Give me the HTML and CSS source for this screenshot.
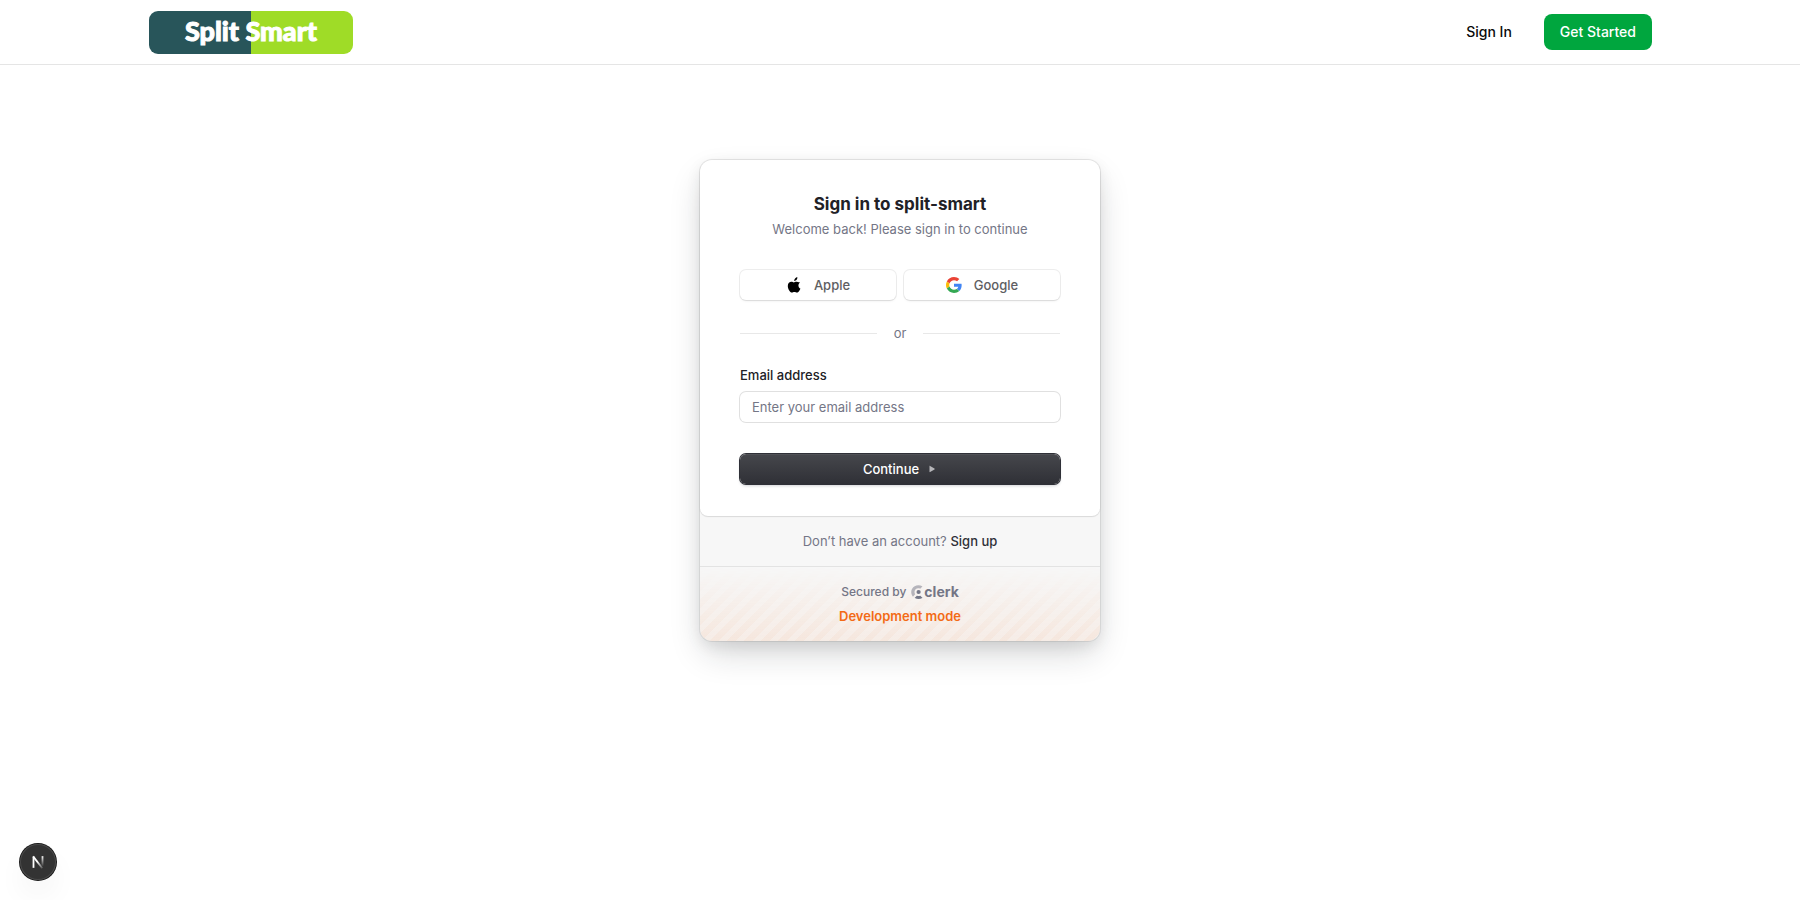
FILE: index.html
```html
<!DOCTYPE html>
<html lang="en">
<head>
<meta charset="utf-8">
<title>Split Smart</title>
<link rel="stylesheet" href="styles.css">
</head>
<body>
<header class="site-header">
  <div class="container">
    <a class="logo" href="#">Split Smart</a>
    <nav class="nav">
      <a class="nav-link" href="#">Sign In</a>
      <button class="nav-cta" type="button">Get Started</button>
    </nav>
  </div>
</header>
<main class="page">
  <div class="card">
    <section class="card-main">
      <div class="heading">
        <h1 class="title">Sign in to split-smart</h1>
        <p class="subtitle">Welcome back! Please sign in to continue</p>
      </div>
      <div class="socials">
        <button class="social" type="button">
          <svg class="social-icon" viewBox="0 0 16 16" aria-hidden="true"><path d="M14.1 5.5c-.1.1-1.7 1-1.7 2.9 0 2.300 2 3.100 2 3.100 0 .1-.3 1.100-1.100 2.200-.6.900-1.300 1.900-2.400 1.900s-1.300-.6-2.500-.6c-1.200 0-1.600.6-2.600.6s-1.700-.9-2.400-1.900C2.500 12.500 1.800 10.700 1.800 9c0-2.800 1.800-4.200 3.600-4.200 1 0 1.800.6 2.400.6.600 0 1.500-.7 2.600-.7.400 0 2 .1 3.700.8ZM10.600 2.700c.5-.6.800-1.300.8-2.100V.2c-.8 0-1.700.5-2.300 1.200-.5.500-.9 1.300-.9 2.100v.4c.8.100 1.800-.5 2.400-1.200Z"/></svg>
          <span>Apple</span>
        </button>
        <button class="social" type="button">
          <svg class="social-icon" viewBox="0 0 48 48" aria-hidden="true"><path fill="#ea4335" d="M24 9.500c3.540 0 6.710 1.220 9.210 3.600l6.850-6.850C35.900 2.380 30.470 0 24 0 14.620 0 6.510 5.380 2.560 13.220l7.980 6.190C12.430 13.720 17.740 9.500 24 9.500z"/><path fill="#4285f4" d="M46.980 24.550c0-1.570-.15-3.090-.38-4.550H24v9.020h12.940c-.58 2.960-2.260 5.480-4.780 7.180l7.730 6c4.510-4.180 7.090-10.360 7.090-17.650z"/><path fill="#fbbc05" d="M10.530 28.590A14.500 14.500 0 0 1 9.770 24c0-1.600.27-3.140.76-4.590l-7.980-6.190A23.900 23.900 0 0 0 0 24c0 3.880.92 7.540 2.560 10.780l7.970-6.190z"/><path fill="#34a853" d="M24 48c6.480 0 11.930-2.130 15.890-5.810l-7.730-6c-2.150 1.450-4.920 2.300-8.160 2.300-6.260 0-11.570-4.220-13.470-9.910l-7.980 6.190C6.510 42.620 14.620 48 24 48z"/></svg>
          <span>Google</span>
        </button>
      </div>
      <div class="divider">or</div>
      <form class="form">
        <div class="field">
          <label class="label" for="email">Email address</label>
          <input class="input" id="email" type="email" placeholder="Enter your email address">
        </div>
        <button class="continue" type="button">Continue
          <svg class="arrow" viewBox="0 0 10 10" aria-hidden="true"><path d="M2.500 2.200v5.600c0 .4.300.5.600.3l4.400-2.700c.3-.2.300-.6 0-.8L3.100 1.900c-.3-.2-.6 0-.6.3Z"/></svg>
        </button>
      </form>
    </section>
    <footer class="card-footer">
      <p class="signup">Don’t have an account? <a class="signup-link" href="#">Sign up</a></p>
      <div class="dev">
        <p class="secured">Secured by
          <a class="clerk" href="#">
            <svg class="clerk-icon" viewBox="0 0 12 14" aria-hidden="true"><path opacity=".5" d="M11.300 1.600 9.500 3.500c-.2.200-.4.200-.6.100C6.300 2.400 3.500 4.100 3.500 7c0 .7.200 1.300.5 1.900.1.200.1.400-.1.600L2.200 11.400c-.2.200-.4.200-.5 0C-.9 7.700.100 3.200 3.700 1.200c2.300-1.300 5.200-1.200 7.500 0 .2.100.2.300.1.400Z"/><circle cx="7.600" cy="7" r="2.100"/><path d="m11.400 12.700-1.800-1.800c-.2-.2-.4-.2-.6-.1-.8.400-2 .4-2.800 0-.2-.1-.4-.1-.6.100l-1.800 1.800c-.2.200-.1.300.1.400 2.200 1.200 5.100 1.200 7.400 0 .2-.1.300-.3.100-.4Z"/></svg>
            <span>clerk</span>
          </a>
        </p>
        <p class="dev-label">Development mode</p>
      </div>
    </footer>
  </div>
</main>
<button class="next-badge" type="button" aria-label="Open Next.js Dev Tools">
  <svg class="next-icon" viewBox="0 0 40 40" fill="none" aria-hidden="true">
    <defs>
      <linearGradient id="stem" x1="0" y1="13" x2="0" y2="25" gradientUnits="userSpaceOnUse"><stop stop-color="#fff"/><stop offset="1" stop-color="#fff" stop-opacity="0"/></linearGradient>
      <linearGradient id="slash" x1="20" y1="19" x2="26" y2="27" gradientUnits="userSpaceOnUse"><stop stop-color="#fff"/><stop offset="1" stop-color="#fff" stop-opacity=".1"/></linearGradient>
    </defs>
    <path stroke="#fff" stroke-width="2" d="M15 26.500V14"/>
    <path stroke="url(#slash)" stroke-width="2" d="m14.600 13.800 10.200 13.200"/>
    <path fill="url(#stem)" d="M24 13.500h2v12.500h-2z"/>
  </svg>
</button>
</body>
</html>
```
FILE: styles.css
```css
* { box-sizing: border-box; }
body {
  margin: 0;
  background: #fff;
  color: #0a0a0a;
  font-family: Inter, "Liberation Sans", sans-serif;
  font-size: 13px;
  line-height: 18px;
}
h1, p { margin: 0; }
a { color: inherit; text-decoration: none; }
button, input { font: inherit; border: 0; }
button { cursor: pointer; }

.site-header { border-bottom: 1px solid #e5e5e5; }
.container {
  display: flex;
  align-items: center;
  justify-content: space-between;
  max-width: 1536px;
  height: 64px;
  margin: 0 auto;
  padding: 0 16px;
}
.logo {
  width: 204px;
  height: 43px;
  margin-left: 1px;
  border-radius: 9px;
  background: linear-gradient(90deg, #28555a 50%, #9fdc27 50%);
  color: #fff;
  font-family: Lato, sans-serif;
  font-size: 27px;
  font-weight: 900;
  line-height: 40px;
  text-align: center;
  -webkit-text-stroke: 1px #fff;
}
.nav { display: flex; align-items: center; gap: 16px; font-size: 14px; font-weight: 500; line-height: 20px; }
.nav-link { padding: 8px 16px; }
.nav-cta {
  padding: 8px 16px;
  border-radius: 8px;
  background: #00a63e;
  color: #fff;
}

.page { display: flex; justify-content: center; padding: 95px 16px; }
.card {
  width: 100%;
  max-width: 400px;
  border-radius: 12px;
  background: #f7f7f7;
  box-shadow: 0 5px 15px rgba(0, 0, 0, .08), 0 15px 35px -5px rgba(25, 28, 33, .2), 0 0 0 1px rgba(0, 0, 0, .07);
}
.card-main {
  padding: 32px 40px;
  border-radius: 12px 12px 8px 8px;
  background: #fff;
  box-shadow: 0 1px 1px rgba(0, 0, 0, .1), 0 0 2px rgba(0, 0, 0, .08);
}
.heading { text-align: center; margin-bottom: 32px; }
.title { margin-bottom: 4px; color: #212126; font-size: 17px; font-weight: 700; line-height: 24px; }
.subtitle { color: #747686; }
.socials { display: grid; grid-template-columns: 1fr 1fr; gap: 8px; }
.social {
  display: flex;
  align-items: center;
  justify-content: center;
  gap: 12px;
  padding: 6px 12px;
  border-radius: 6px;
  background: #fff;
  color: #5e5e62;
  font-weight: 500;
  box-shadow: 0 0 0 1px rgba(0, 0, 0, .07), 0 2px 3px -1px rgba(0, 0, 0, .08), 0 1px 0 rgba(0, 0, 0, .02);
}
.social-icon { width: 16px; height: 16px; }
.divider { display: flex; align-items: center; gap: 17px; margin: 24px 0; color: #747686; }
.divider::before, .divider::after { content: ""; flex: 1; height: 1px; background: #e8e8e8; }
.form { display: grid; gap: 32px; }
.field { display: grid; gap: 8px; }
.label { color: #212126; font-weight: 500; }
.input {
  width: 100%;
  height: 30px;
  padding: 6px 12px;
  border-radius: 6px;
  background: #fff;
  color: #212126;
  box-shadow: 0 0 0 1px rgba(0, 0, 0, .12);
}
.input::placeholder { color: #747686; opacity: 1; }
.continue {
  display: flex;
  align-items: center;
  justify-content: center;
  gap: 8px;
  padding: 6px 12px;
  border-radius: 6px;
  background: linear-gradient(#46474c, #2f3036);
  color: #fff;
  font-weight: 500;
  box-shadow: 0 0 0 1px #2f3037, inset 0 1px 1px rgba(255, 255, 255, .07), 0 2px 3px rgba(34, 42, 53, .2);
}
.arrow { width: 10px; height: 10px; fill: #b6b6b9; }
.card-footer { text-align: center; }
.signup { padding: 16px; color: #747686; }
.signup-link { color: #2f3037; font-weight: 500; }
.dev {
  position: relative;
  display: grid;
  gap: 5px;
  padding: 15px 32px 16px;
  border-top: 1px solid #e3e3e3;
}
.dev::before {
  content: "";
  position: absolute;
  inset: 0;
  border-radius: 0 0 12px 12px;
  background: repeating-linear-gradient(-45deg, rgba(243, 107, 22, .07), rgba(243, 107, 22, .07) 6px, rgba(243, 107, 22, .11) 6px, rgba(243, 107, 22, .11) 12px);
  mask-image: linear-gradient(transparent, #000);
}
.secured {
  position: relative;
  display: flex;
  align-items: center;
  justify-content: center;
  gap: 5px;
  color: #747686;
  font-size: 12px;
  font-weight: 500;
  line-height: 20px;
}
.clerk { display: flex; align-items: center; gap: 1px; font-size: 14px; font-weight: 700; line-height: 18px; }
.clerk-icon { width: 12px; height: 14px; fill: currentColor; }
.dev-label { position: relative; color: #f36b16; font-weight: 600; }

.next-badge {
  position: fixed;
  left: 20px;
  bottom: 20px;
  width: 36px;
  height: 36px;
  padding: 0;
  border-radius: 50%;
  background: #333;
  box-shadow: inset 0 0 0 1px #4a4a4a, 0 0 0 1px #171717, 0 16px 32px -8px rgba(0, 0, 0, .14);
}
.next-icon { display: block; width: 36px; height: 36px; }
```
